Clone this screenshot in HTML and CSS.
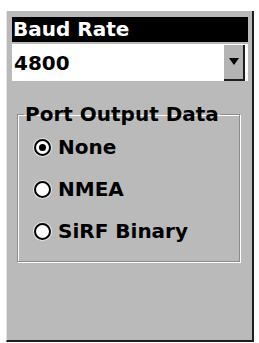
FILE: index.html
```html
<!DOCTYPE html>
<html lang="en">
<head>
  <meta charset="UTF-8" />
  <title>Port Setup</title>
  <link rel="stylesheet" href="styles.css">
</head>
<body>
  <div class="panel">
    <div class="title">Baud Rate</div>
    <div class="select">
      <span class="value">4800</span>
      <span class="drop"><span class="arrow"></span></span>
    </div>

    <fieldset class="group">
      <legend>Port Output Data</legend>
      <div class="options">
        <div class="option"><span class="radio checked"></span>None</div>
        <div class="option"><span class="radio"></span>NMEA</div>
        <div class="option"><span class="radio"></span>SiRF Binary</div>
      </div>
    </fieldset>
  </div>
</body>
</html>
```

FILE: styles.css
```css
body {
  margin: 0;
  background: #fff;
  font-family: 'DejaVu Sans', 'Liberation Sans', sans-serif;
  font-weight: bold;
  font-size: 20px;
  color: #000;
}

/* === PANEL === */
.panel {
  box-sizing: border-box;
  width: 248px;
  height: 331px;
  margin: 11px 0 0 6px;
  padding: 6px 4px 0 5px;
  background: #bababa;
  border-left: 1px solid #e4e4e4;
  border-right: 2px solid #1e1e1e;
  border-bottom: 2px solid #1e1e1e;
}

.title {
  height: 25px;
  line-height: 25px;
  padding-left: 1px;
  background: #000;
  color: #fff;
}

/* === DROPDOWN === */
.select {
  display: flex;
  align-items: center;
  justify-content: space-between;
  height: 37px;
  margin-top: 2px;
  padding: 0 3px 0 2px;
  background: #fff;
}

.drop {
  box-sizing: border-box;
  display: flex;
  align-items: center;
  justify-content: center;
  width: 21px;
  height: 36px;
  background: #b4b4b4;
  border-right: 2px solid #1e1e1e;
  border-bottom: 2px solid #1e1e1e;
}

.arrow {
  width: 0;
  height: 0;
  border-left: 5px solid transparent;
  border-right: 5px solid transparent;
  border-top: 7px solid #000;
}

/* === OUTPUT GROUP === */
.group {
  margin: 21px 8px 0 5px;
  padding: 0 6px 9px 6px;
  border: 1px solid #8c8c8c;
  box-shadow: 1px 1px 0 #fff, inset 1px 1px 0 #fff;
}

.group legend {
  padding: 0 1px;
  line-height: 24px;
}

.options {
  padding-left: 10px;
}

.option {
  display: flex;
  align-items: center;
  gap: 7px;
  height: 42px;
}

.radio {
  box-sizing: border-box;
  display: flex;
  align-items: center;
  justify-content: center;
  width: 17px;
  height: 17px;
  border: 2px solid #000;
  border-radius: 50%;
  background: #fff;
  box-shadow: 0 0 0 1px #e8e8e8;
}

.radio.checked::after {
  content: '';
  width: 7px;
  height: 7px;
  border-radius: 50%;
  background: #000;
}
```
